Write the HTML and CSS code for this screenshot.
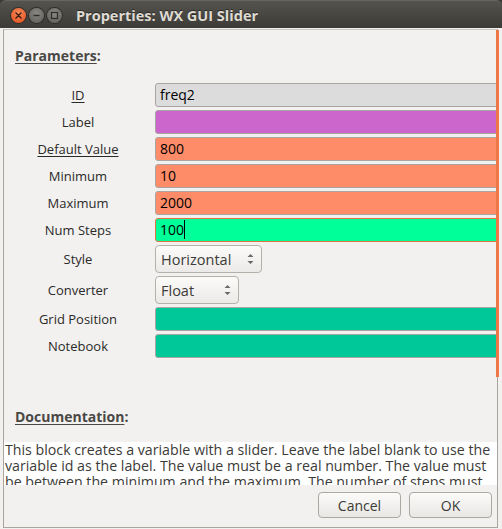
FILE: index.html
```html
<!DOCTYPE html>
<html>
<head>
<meta charset="utf-8">
<title>Properties: WX GUI Slider</title>
<link rel="stylesheet" href="styles.css">
</head>
<body>
<div class="window">
  <div class="titlebar">
    <div class="controls">
      <span class="wbtn close"><svg width="15" height="15" viewBox="0 0 15 15"><path d="M5 5 L10 10 M10 5 L5 10" stroke="#3a1a0c" stroke-width="1.4" stroke-linecap="round"/></svg></span>
      <span class="wbtn"><svg width="15" height="15" viewBox="0 0 15 15"><path d="M4.5 7.5 H10.5" stroke="#2e2d2a" stroke-width="1.4"/></svg></span>
      <span class="wbtn"><svg width="15" height="15" viewBox="0 0 15 15"><rect x="4.5" y="4.5" width="6" height="6" fill="none" stroke="#2e2d2a" stroke-width="1.2"/></svg></span>
    </div>
    <div class="title">Properties: WX GUI Slider</div>
  </div>
  <div class="client">
    <div class="panel">
      <div class="scroll">
        <div class="content">
          <div class="heading">Parameters</div>
          <div class="params">
            <div class="label u">ID</div>
            <div class="field f-id">freq2</div>
            <div class="label">Label</div>
            <div class="field f-label"></div>
            <div class="label u">Default Value</div>
            <div class="field f-num">800</div>
            <div class="label">Minimum</div>
            <div class="field f-num">10</div>
            <div class="label">Maximum</div>
            <div class="field f-num">2000</div>
            <div class="label">Num Steps</div>
            <div class="field f-focus"><span class="caret">100</span></div>
            <div class="label">Style</div>
            <div class="combo-cell"><div class="combo c-style"><span>Horizontal</span><svg class="spin" width="7" height="12" viewBox="0 0 7 12"><path d="M0.5 4 L3.5 1 L6.5 4 Z M0.5 8 L3.5 11 L6.5 8 Z" fill="#6b6a67"/></svg></div></div>
            <div class="label">Converter</div>
            <div class="combo-cell"><div class="combo c-conv"><span>Float</span><svg class="spin" width="7" height="12" viewBox="0 0 7 12"><path d="M0.5 4 L3.5 1 L6.5 4 Z M0.5 8 L3.5 11 L6.5 8 Z" fill="#6b6a67"/></svg></div></div>
            <div class="label">Grid Position</div>
            <div class="field f-grid"></div>
            <div class="label">Notebook</div>
            <div class="field f-grid"></div>
          </div>
          <div class="heading doc-heading">Documentation</div>
          <div class="doc">This block creates a variable with a slider. Leave the label blank to use the<br>variable id as the label. The value must be a real number. The value must<br>be between the minimum and the maximum. The number of steps must<br>be between 0 and 1000.<br><br>The GUI hint can be used to position the widget within the application.<br>The hint is of the form [tab_id@tab_index]: [row, col, row_span, col_span].<br>Both the tab specification and the grid position are optional.</div>
        </div>
      </div>
      <div class="thumb"></div>
      <div class="buttons">
        <button class="btn">Cancel</button>
        <button class="btn">OK</button>
      </div>
    </div>
  </div>
</div>
</body>
</html>
```
FILE: styles.css
```css
* { box-sizing: border-box; }
html, body { margin: 0; padding: 0; }
body {
  width: 502px;
  height: 529px;
  overflow: hidden;
  background: #3c3b37;
  font-family: "Open Sans", "Noto Sans", sans-serif;
}
.window {
  width: 502px;
  height: 529px;
  display: flex;
  flex-direction: column;
}
.titlebar {
  height: 28px;
  flex: none;
  display: flex;
  align-items: center;
  padding: 1px 0 0 11px;
  background: linear-gradient(#55534e, #3c3b37);
  border-radius: 6px 6px 0 0;
  border-top: 1px solid #67655f;
}
.controls { display: flex; gap: 3px; }
.wbtn {
  width: 15px;
  height: 15px;
  border-radius: 50%;
  background: radial-gradient(circle at 50% 35%, #8a8984, #5a5955);
  box-shadow: 0 0 0 1px #2f2e2b;
  display: block;
}
.wbtn svg { display: block; }
.close { background: radial-gradient(circle at 50% 35%, #f88a5c, #df4a16); }
.title {
  margin-left: 14px;
  color: #dfdbd2;
  font-size: 14.5px;
  font-weight: bold;
  text-shadow: 0 -1px 0 #2a2927;
}
.client {
  flex: 1;
  min-height: 0;
  min-width: 0;
  background: #f2f1f0;
  padding: 1px 4px 1px 3px;
  display: flex;
}
.panel {
  position: relative;
  flex: 1;
  min-width: 0;
  border: 1px solid #aaa69f;
  border-top-color: #c9c5bf;
  display: flex;
  flex-direction: column;
}
.scroll {
  height: 455px;
  flex: none;
  min-width: 0;
  overflow: hidden;
}
.thumb {
  position: absolute;
  right: -2px;
  top: 0;
  width: 3px;
  height: 347px;
  background: #f07746;
}
.content {
  padding: 16px 0 0 0;
  width: 600px;
}
.heading {
  margin-left: 11px;
  font-size: 14px;
  font-weight: bold;
  color: #4a4845;
  line-height: 19px;
  height: 19px;
}
.heading { text-decoration: underline; text-underline-offset: 2px; }
.heading::after { content: ":"; display: inline-block; text-decoration: none; }
.params {
  margin-top: 18px;
  display: grid;
  grid-template-columns: 148px 360px;
  column-gap: 3px;
  row-gap: 3px;
  align-items: center;
}
.label {
  text-align: center;
  font-size: 13px;
  color: #2b2a28;
}
.u { text-decoration: underline; text-underline-offset: 2px; }
.field {
  height: 24px;
  border: 1px solid #a9a6a1;
  border-radius: 3px;
  padding-left: 4px;
  font-size: 14px;
  line-height: 22px;
  color: #000;
}
.f-id { background: #dcdcdc; }
.f-label { background: #cc66cc; }
.f-num { background: #ff8c69; }
.f-focus { background: #00ff99; border-color: #e3703f; }
.f-grid { background: #00c899; }
.caret { border-right: 1px solid #000; padding-right: 0; }
.combo-cell { display: flex; }
.combo {
  height: 28px;
  border: 1px solid #b4b0aa;
  border-radius: 4px;
  background: linear-gradient(#fbfbfa, #eceae8);
  display: flex;
  align-items: center;
  justify-content: space-between;
  padding: 0 7px 0 5px;
  font-size: 14.5px;
  color: #3c3b37;
}
.c-style { width: 107px; }
.c-conv { width: 84px; }
.spin { display: block; }
.doc-heading { margin-top: 49px; }
.doc {
  margin-top: 16px;
  background: #ffffff;
  font-size: 14.2px;
  line-height: 16px;
  color: #3c3b37;
  padding-left: 1px;
}
.buttons {
  display: flex;
  justify-content: flex-end;
  gap: 8px;
  padding: 7px 5px 0 0;
}
.btn {
  width: 83px;
  height: 26px;
  border: 1px solid #aca8a2;
  border-radius: 4px;
  background: linear-gradient(#fbfbfa, #e9e7e4);
  font-family: inherit;
  font-size: 14px;
  color: #3c3b37;
  padding: 0;
}
```
